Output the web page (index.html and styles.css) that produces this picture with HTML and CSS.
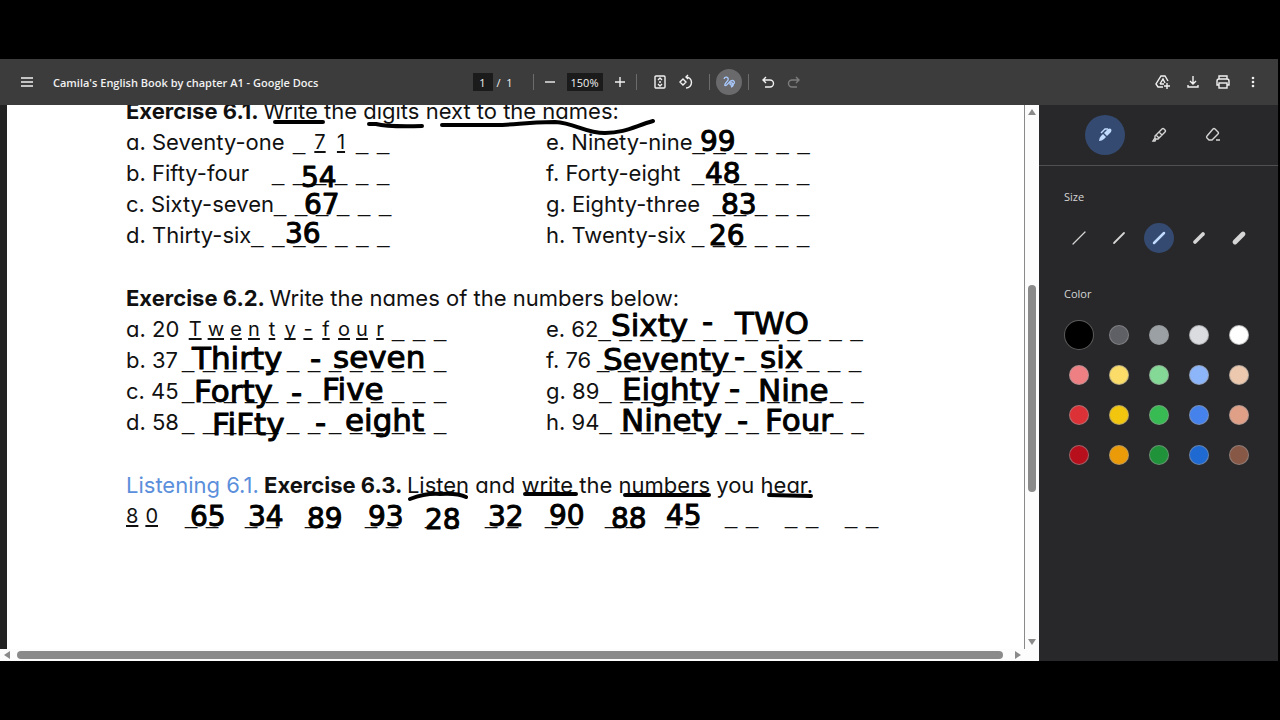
FILE: index.html
```html
<!DOCTYPE html>
<html lang="en">
<head>
    <meta charset="UTF-8">
    <meta name="viewport" content="width=device-width, initial-scale=1.0">
    <title>Camila's English Book by chapter A1 - Google Docs</title>
    <link rel="stylesheet" href="styles.css">
</head>
<body>
    <div class="app">
        <header class="toolbar">
            <div class="toolbar-left">
                <button class="icon-button" aria-label="Menu">
                    <svg width="14" height="14" viewBox="0 0 14 14"><path d="M1 3h12M1 7h12M1 11h12"/></svg>
                </button>
                <h1>Camila's English Book by chapter A1 - Google Docs</h1>
            </div>
            <div class="toolbar-center">
                <input class="field page-field" type="text" value="1" aria-label="Page number">
                <span class="page-total">/ &nbsp;1</span>
                <span class="separator"></span>
                <button class="small-button" aria-label="Zoom out">
                    <svg width="12" height="12" viewBox="0 0 12 12"><path d="M1 6h10"/></svg>
                </button>
                <input class="field zoom-field" type="text" value="150%" aria-label="Zoom level">
                <button class="small-button" aria-label="Zoom in">
                    <svg width="12" height="12" viewBox="0 0 12 12"><path d="M1 6h10M6 1v10"/></svg>
                </button>
                <span class="separator"></span>
                <button class="icon-button fit-button" aria-label="Fit to page">
                    <svg width="16" height="16" viewBox="0 0 16 16"><rect x="3" y="2" width="10" height="12" rx="1"/><path d="M6 6l2-2 2 2M6 10l2 2 2-2M7 8h2"/></svg>
                </button>
                <button class="icon-button" aria-label="Rotate">
                    <svg width="16" height="16" viewBox="0 0 16 16"><path d="M5 5L8 8 5 11 2 8zM8 3a5.500 5.500 0 1 1 0 11M10 1L8 3l2 2"/></svg>
                </button>
                <span class="separator draw-separator"></span>
                <button class="icon-button draw-button" aria-label="Draw">
                    <svg width="16" height="16" viewBox="0 0 16 16"><path d="M3 5C4 2 8 3 7 6C6 8 3 10 4 11.500C6 13 8 6 11.500 6.500C15 7.500 13 11 10.500 11C8 11 9 8 11 9C13 10 12.500 12 10 13"/></svg>
                </button>
                <span class="separator"></span>
                <button class="icon-button" aria-label="Undo">
                    <svg width="14" height="14" viewBox="0 0 14 14"><path d="M5 2L2 5l3 3M2 5h7a3 3 0 0 1 0 7H4"/></svg>
                </button>
                <button class="icon-button" aria-label="Redo" disabled>
                    <svg width="14" height="14" viewBox="0 0 14 14"><path d="M9 2l3 3-3 3M12 5H5a3 3 0 0 0 0 7h5"/></svg>
                </button>
            </div>
            <div class="toolbar-right">
                <button class="icon-button" aria-label="Save to Drive">
                    <svg width="16" height="16" viewBox="0 0 16 16"><path d="M8 13H3L1 10 6 2h4l3 5M5 10l3-5 2 4M5 10h4M12 9v6M9 12h6"/></svg>
                </button>
                <button class="icon-button" aria-label="Download">
                    <svg width="14" height="14" viewBox="0 0 14 14"><path d="M7 1v8M4 6l3 3 3-3M2 10v2h10v-2"/></svg>
                </button>
                <button class="icon-button" aria-label="Print">
                    <svg width="16" height="16" viewBox="0 0 16 16"><path d="M4 5V2h8v3M4 11H2V7q0-2 2-2h8q2 0 2 2v4h-2"/><rect x="4" y="9" width="8" height="5"/></svg>
                </button>
                <button class="icon-button" aria-label="More actions">
                    <svg class="filled" width="14" height="14" viewBox="0 0 14 14"><circle cx="7" cy="3" r="1.300"/><circle cx="7" cy="7" r="1.300"/><circle cx="7" cy="11" r="1.300"/></svg>
                </button>
            </div>
        </header>

        <div class="viewer">
            <main class="viewport">
                <div class="page">
                    <section>
                        <h2>Exercise 6.1. <span>Write the digits next to the names:</span></h2>
                        <div class="columns short">
                            <div>
                                <p><span>a. Seventy-one</span><span class="blanks"><i>_</i><u>7</u><u>1</u><i>_</i><i>_</i></span></p>
                                <p><span>b. Fifty-four</span><span class="blanks" data-count="6"></span></p>
                                <p><span>c. Sixty-seven</span><span class="blanks" data-count="6"></span></p>
                                <p><span>d. Thirty-six</span><span class="blanks" data-count="7"></span></p>
                            </div>
                            <div>
                                <p><span>e. Ninety-nine</span><span class="blanks" data-count="6"></span></p>
                                <p><span>f. Forty-eight</span><span class="blanks" data-count="6"></span></p>
                                <p><span>g. Eighty-three</span><span class="blanks" data-count="5"></span></p>
                                <p><span>h. Twenty-six</span><span class="blanks" data-count="6"></span></p>
                            </div>
                        </div>
                    </section>
                    <section>
                        <h2>Exercise 6.2. <span>Write the names of the numbers below:</span></h2>
                        <div class="columns long">
                            <div>
                                <p><span>a. 20</span><span class="blanks letters"><u>T</u><u>w</u><u>e</u><u>n</u><u>t</u><u>y</u><u>-</u><u>f</u><u>o</u><u>u</u><u>r</u><span class="blanks" data-count="3"></span></span></p>
                                <p><span>b. 37</span><span class="blanks" data-count="13"></span></p>
                                <p><span>c. 45</span><span class="blanks" data-count="13"></span></p>
                                <p><span>d. 58</span><span class="blanks" data-count="13"></span></p>
                            </div>
                            <div>
                                <p><span>e. 62</span><span class="blanks" data-count="13"></span></p>
                                <p><span>f. 76</span><span class="blanks" data-count="13"></span></p>
                                <p><span>g. 89</span><span class="blanks" data-count="13"></span></p>
                                <p><span>h. 94</span><span class="blanks" data-count="13"></span></p>
                            </div>
                        </div>
                    </section>
                    <section>
                        <h2><a href="#">Listening 6.1.</a> Exercise 6.3. <span>Listen and write the numbers you hear.</span></h2>
                        <div class="pairs">
                            <span class="blanks example"><u>8</u><u>0</u></span>
                            <span class="blanks" data-count="2"></span>
                            <span class="blanks" data-count="2"></span>
                            <span class="blanks" data-count="2"></span>
                            <span class="blanks" data-count="2"></span>
                            <span class="blanks" data-count="2"></span>
                            <span class="blanks" data-count="2"></span>
                            <span class="blanks" data-count="2"></span>
                            <span class="blanks" data-count="2"></span>
                            <span class="blanks" data-count="2"></span>
                            <span class="blanks" data-count="2"></span>
                            <span class="blanks" data-count="2"></span>
                            <span class="blanks" data-count="2"></span>
                        </div>
                    </section>

                    <!-- pen annotations -->
                    <svg class="ink" width="1018" height="544" viewBox="7 105 1018 544">
                        <path d="M275 122H323M369 124H376Q388 127 422 126M442 125H495C520 125 520 122 555 122C575 123 585 133 605 133C625 133 635 126 653 121"/>
                        <path d="M410 499Q426 493 440 494Q458 493 466 497M525 494H576M625 495H709M769 495L811 496"/>
                        <text x="301" y="187">54</text>
                        <text x="304" y="214">67</text>
                        <text x="285" y="243">36</text>
                        <text x="700" y="151">99</text>
                        <text x="705" y="183">48</text>
                        <text x="721" y="214">83</text>
                        <text x="709" y="245">26</text>
                        <g class="words">
                            <text x="192" y="369">Thirty</text>
                            <text x="310" y="369">-</text>
                            <text x="333" y="368">seven</text>
                            <text x="194" y="402">Forty</text>
                            <text x="291" y="403">-</text>
                            <text x="322" y="400">Five</text>
                            <text x="212" y="435">FiFty</text>
                            <text x="315" y="433">-</text>
                            <text x="345" y="431">eight</text>
                            <text x="611" y="336">Sixty</text>
                            <text x="702" y="332">-</text>
                            <text x="735" y="334">TWO</text>
                            <text x="603" y="370">Seventy</text>
                            <text x="734" y="367">-</text>
                            <text x="760" y="368">six</text>
                            <text x="622" y="400">Eighty</text>
                            <text x="729" y="399">-</text>
                            <text x="758" y="401">Nine</text>
                            <text x="621" y="431">Ninety</text>
                            <text x="737" y="431">-</text>
                            <text x="765" y="431">Four</text>
                        </g>
                        <text x="190" y="526">65</text>
                        <text x="248" y="526">34</text>
                        <text x="307" y="528">89</text>
                        <text x="368" y="526">93</text>
                        <text x="425" y="529">28</text>
                        <text x="488" y="526">32</text>
                        <text x="549" y="525">90</text>
                        <text x="611" y="528">88</text>
                        <text x="666" y="525">45</text>
                    </svg>
                </div>
                <div class="scrollbar vertical">
                    <svg width="8" height="14" viewBox="0 0 8 14"><path d="M4 4l4 6H0z"/></svg>
                    <div class="track"><div class="thumb"></div></div>
                    <svg width="8" height="14" viewBox="0 0 8 14"><path d="M4 10L0 4h8z"/></svg>
                </div>
                <div class="scrollbar horizontal">
                    <svg width="14" height="8" viewBox="0 0 14 8"><path d="M4 4l6-4v8z"/></svg>
                    <div class="track"><div class="thumb"></div></div>
                    <svg width="14" height="8" viewBox="0 0 14 8"><path d="M10 4L4 0v8z"/></svg>
                </div>
            </main>

            <aside class="panel">
                <div class="tools">
                    <button class="tool active" aria-label="Pen">
                        <svg class="filled" width="16" height="16" viewBox="0 0 16 16"><path d="M2 14q0-3 2-5l2-2 3 3-2 2q-2 2-5 2zM8 5l3-3q2-1 3 0t0 3l-4 4-3-3z"/><path class="line" d="M4 6l4-4h3"/></svg>
                    </button>
                    <button class="tool" aria-label="Highlighter">
                        <svg width="16" height="16" viewBox="0 0 16 16"><path d="M4 9l7-7q1-1 2 0l1 1q1 1 0 2l-7 7-2 0-1 2H2l2-3zM5 8l3 3M8 5l3 3"/></svg>
                    </button>
                    <button class="tool" aria-label="Eraser">
                        <svg width="16" height="16" viewBox="0 0 16 16"><path d="M2 9l6-7q1-1 2 0l3 3q1 1 0 2l-6 6H4l-2-2q-1-1 0-2zM11 13h4"/></svg>
                    </button>
                </div>
                <h3>Size</h3>
                <div class="options">
                    <button class="size" aria-label="Extra thin"><svg width="16" height="16" viewBox="0 0 16 16"><path stroke-width="1.200" d="M2 14L14 2"/></svg></button>
                    <button class="size" aria-label="Thin"><svg width="16" height="16" viewBox="0 0 16 16"><path stroke-width="1.800" d="M3 13L13 3"/></svg></button>
                    <button class="size active" aria-label="Medium"><svg width="16" height="16" viewBox="0 0 16 16"><path stroke-width="2.500" d="M3 13L13 3"/></svg></button>
                    <button class="size" aria-label="Thick"><svg width="16" height="16" viewBox="0 0 16 16"><path stroke-width="3.800" d="M4 12L12 4"/></svg></button>
                    <button class="size" aria-label="Extra thick"><svg width="16" height="16" viewBox="0 0 16 16"><path stroke-width="4.800" d="M4 12L12 4"/></svg></button>
                </div>
                <h3>Color</h3>
                <div class="options">
                    <input type="radio" name="color" class="black" aria-label="Black" checked>
                    <input type="radio" name="color" class="dark-grey" aria-label="Dark grey">
                    <input type="radio" name="color" class="grey" aria-label="Grey">
                    <input type="radio" name="color" class="light-grey" aria-label="Light grey">
                    <input type="radio" name="color" class="white" aria-label="White">
                    <input type="radio" name="color" class="light-red" aria-label="Light red">
                    <input type="radio" name="color" class="light-yellow" aria-label="Light yellow">
                    <input type="radio" name="color" class="light-green" aria-label="Light green">
                    <input type="radio" name="color" class="light-blue" aria-label="Light blue">
                    <input type="radio" name="color" class="tan-1" aria-label="Tan 1">
                    <input type="radio" name="color" class="red" aria-label="Red">
                    <input type="radio" name="color" class="yellow" aria-label="Yellow">
                    <input type="radio" name="color" class="green" aria-label="Green">
                    <input type="radio" name="color" class="blue" aria-label="Blue">
                    <input type="radio" name="color" class="tan-2" aria-label="Tan 2">
                    <input type="radio" name="color" class="dark-red" aria-label="Dark red">
                    <input type="radio" name="color" class="orange" aria-label="Orange">
                    <input type="radio" name="color" class="dark-green" aria-label="Dark green">
                    <input type="radio" name="color" class="dark-blue" aria-label="Dark blue">
                    <input type="radio" name="color" class="brown" aria-label="Brown">
                </div>
            </aside>
        </div>
    </div>

    <script>
        // fill the answer lines with blanks
        document.querySelectorAll('[data-count]').forEach(line => {
            line.innerHTML = '<i>_</i>'.repeat(line.dataset.count);
        });
    </script>
</body>
</html>
```
FILE: styles.css
```css
* {
    box-sizing: border-box;
}
body {
    margin: 0;
    height: 100vh;
    padding: 59px 2px 59px 0;
    background-color: #000;
    font-family: "Open Sans", "Noto Sans", sans-serif;
    font-size: 11px;
    color: #f1f1f1;
}
h1, h2, h3, p {
    margin: 0;
}
button {
    display: flex;
    align-items: center;
    justify-content: center;
    padding: 0;
    border: none;
    background: none;
    color: inherit;
    cursor: pointer;
}
button:disabled {
    color: #7d7d7d;
}
svg {
    display: block;
    flex: none;
    fill: none;
    stroke: currentColor;
    stroke-width: 1.4;
}
.filled {
    fill: currentColor;
    stroke: none;
}
.app {
    display: flex;
    flex-direction: column;
    height: 100%;
}

/* toolbar */
.toolbar {
    display: grid;
    grid-template-columns: 1fr auto 1fr;
    align-items: center;
    flex: none;
    height: 46px;
    padding: 0 12px 0 13px;
    background-color: #3c3c3c;
}
.toolbar-left, .toolbar-center, .toolbar-right {
    display: flex;
    align-items: center;
}
.toolbar-left {
    gap: 12px;
}
.toolbar-right {
    justify-content: flex-end;
    gap: 4px;
}
.toolbar h1 {
    font-size: 11px;
    font-weight: 600;
    white-space: nowrap;
}
.icon-button {
    width: 26px;
    height: 26px;
    border-radius: 50%;
}
.small-button {
    width: 20px;
    height: 26px;
}
.toolbar-left .icon-button {
    width: 28px;
}
.field {
    height: 18px;
    padding: 0;
    border: none;
    background-color: #1b1b1b;
    color: #f1f1f1;
    font: inherit;
    text-align: center;
}
.page-field {
    width: 20px;
}
.zoom-field {
    width: 36px;
    margin: 0 7px;
}
.page-total {
    width: 30px;
    margin-left: 4px;
}
.separator {
    width: 1px;
    height: 16px;
    margin: 0 6px;
    background-color: #6b6b6b;
}
.fit-button {
    margin-left: 4px;
}
.draw-separator {
    margin-left: 10px;
}
.draw-button {
    background-color: #6a6a6d;
    color: #a8c7fa;
}

/* document */
.viewer {
    display: flex;
    flex: 1;
    min-height: 0;
}
.viewport {
    display: grid;
    grid-template: 1fr 12px / 1fr 14px;
    flex: 1;
    min-width: 0;
    background-color: #fcfcfc;
}
.page {
    position: relative;
    overflow: hidden;
    border-left: 7px solid #222;
    border-right: 1px solid #8a8a8a;
    padding-left: 119px;
    background-color: #fff;
    color: #111;
    font-family: Inter, "Open Sans", sans-serif;
    font-feature-settings: "cv11";
    font-size: 22px;
    line-height: 31px;
    white-space: nowrap;
}
section {
    margin-bottom: 32px;
}
section:first-child {
    margin-top: -9px;
}
.page h2 {
    font-size: 22px;
    font-weight: 700;
}
.page h2 span {
    font-weight: 400;
}
.page a {
    color: #5b8fdb;
    font-weight: 400;
    text-decoration: none;
}
.columns {
    display: grid;
    grid-template-columns: 420px 1fr;
}
.columns p {
    display: flex;
    justify-content: space-between;
}
.short p {
    width: 263px;
}
.long p {
    width: 320px;
}
.long div + div p {
    width: 315px;
}
.blanks {
    display: flex;
    gap: 9px;
}
.blanks i {
    width: 12px;
    font-family: "Liberation Sans", Arial, sans-serif;
    font-style: normal;
}
.blanks u {
    min-width: 12px;
    font-size: 20px;
    text-align: center;
    text-decoration-thickness: 2px;
    text-underline-offset: 2px;
    text-decoration-skip-ink: none;
}
.letters {
    gap: 6px;
}
.pairs {
    display: flex;
    gap: 27px;
}
.example {
    gap: 7px;
}
.ink {
    position: absolute;
    top: 0;
    left: 0;
    color: #000;
    stroke-width: 4;
    stroke-linecap: round;
    stroke-linejoin: round;
}
.ink text {
    fill: currentColor;
    stroke-width: 1;
    font-family: "DejaVu Sans", sans-serif;
    font-size: 28px;
}
.ink .words text {
    font-size: 31px;
}

/* scrollbars */
.scrollbar {
    display: flex;
    align-items: center;
}
.scrollbar svg {
    fill: #8a8a8a;
    stroke: none;
}
.vertical {
    flex-direction: column;
}
.horizontal {
    grid-column: 1 / 3;
    padding: 0 14px 0 0;
}
.track {
    display: grid;
    flex: 1;
}
.vertical .track {
    grid-template-rows: 166fr 208fr 143fr;
    width: 8px;
}
.horizontal .track {
    grid-template-columns: 3fr 987fr 8fr;
    height: 8px;
}
.thumb {
    border-radius: 4px;
    background-color: #8a8a8a;
}
.vertical .thumb {
    grid-row: 2;
}
.horizontal .thumb {
    grid-column: 2;
}

/* side panel */
.panel {
    flex: none;
    width: 239px;
    background-color: #28282a;
    color: #d5d5d5;
}
.tools {
    display: flex;
    align-items: center;
    justify-content: center;
    gap: 14px;
    height: 61px;
    border-bottom: 1px solid #505052;
}
.tool {
    width: 40px;
    height: 40px;
    border-radius: 50%;
}
.active {
    background-color: #344a70;
    color: #c2dcff;
}
.line {
    fill: none;
    stroke: currentColor;
}
.panel h3 {
    margin: 22px 25px 12px;
    font-size: 11px;
    font-weight: 400;
    line-height: 18px;
}
.options + h3 {
    margin-top: 27px;
}
.options {
    display: grid;
    grid-template-columns: repeat(5, 40px);
    grid-auto-rows: 40px;
    place-items: center;
    justify-content: center;
}
.size {
    width: 30px;
    height: 30px;
    border-radius: 50%;
}
.size svg {
    stroke-linecap: round;
}
.options input {
    appearance: none;
    width: 20px;
    height: 20px;
    margin: 0;
    border: 1px solid rgba(150, 150, 150, 0.6);
    border-radius: 50%;
}
.options input:checked {
    width: 30px;
    height: 30px;
}
.black { background-color: #000; }
.dark-grey { background-color: #5f6065; }
.grey { background-color: #9aa0a4; }
.light-grey { background-color: #dadce0; }
.white { background-color: #fff; }
.light-red { background-color: #ee8084; }
.light-yellow { background-color: #fbdc69; }
.light-green { background-color: #84d996; }
.light-blue { background-color: #8db5fa; }
.tan-1 { background-color: #ecc9ae; }
.red { background-color: #dc3237; }
.yellow { background-color: #f2c50f; }
.green { background-color: #38bb52; }
.blue { background-color: #4682ec; }
.tan-2 { background-color: #e0a088; }
.dark-red { background-color: #b80f1d; }
.orange { background-color: #ec9b08; }
.dark-green { background-color: #1f923a; }
.dark-blue { background-color: #1e69d2; }
.brown { background-color: #885847; }
```
